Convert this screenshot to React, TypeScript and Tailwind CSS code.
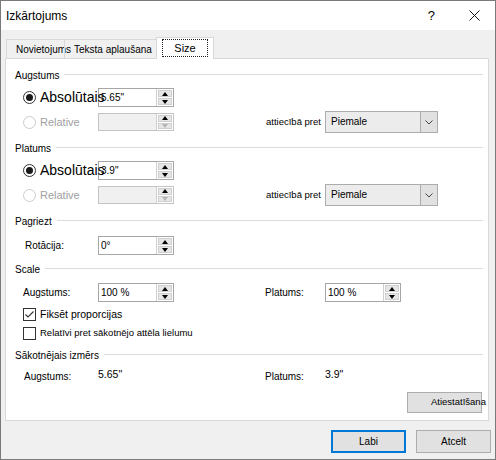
import React from 'react';

const font = { fontFamily: '"Liberation Sans", Arial, sans-serif' };

const Tri = ({ up, muted }: { up?: boolean; muted?: boolean }) => (
  <span
    className={`h-0 w-0 border-x-[3px] border-x-transparent ${
      up ? 'border-b-[4px]' : 'border-t-[4px]'
    } ${muted ? (up ? 'border-b-[#9a9a9a]' : 'border-t-[#b5b5b5]') : up ? 'border-b-black' : 'border-t-black'}`}
  />
);

const Spin = ({ value, disabled, h = 'h-[19px]' }: { value?: string; disabled?: boolean; h?: string }) => (
  <div
    className={`flex ${h} w-[76px] shrink-0 border ${
      disabled ? 'border-[#c4c4c4] bg-[#f0f0f0]' : 'border-[#a6a6a6] bg-white'
    }`}
  >
    <div className="flex-1 pl-[2px] text-[10px] leading-[17px] text-black">{value}</div>
    <div className="flex w-[17px] flex-col gap-px border-l border-[#d0d0d0] bg-white p-px">
      <div className="flex flex-1 items-center justify-center border border-[#cfcfcf] bg-[#e6e6e6]">
        <Tri up />
      </div>
      <div className="flex flex-1 items-center justify-center border border-[#cfcfcf] bg-[#e6e6e6]">
        <Tri muted={disabled} />
      </div>
    </div>
  </div>
);

const Radio = ({ checked, disabled }: { checked?: boolean; disabled?: boolean }) => (
  <span
    className={`flex h-[13px] w-[13px] shrink-0 items-center justify-center rounded-full border bg-white ${
      disabled ? 'border-[#cccccc]' : 'border-[#333333]'
    }`}
  >
    {checked && <span className="h-[7px] w-[7px] rounded-full bg-[#1a1a1a]" />}
  </span>
);

const Check = ({ checked }: { checked?: boolean }) => (
  <span className="flex h-[13px] w-[13px] shrink-0 items-center justify-center border border-[#333333] bg-white">
    {checked && (
      <svg width="11" height="11" viewBox="0 0 11 11">
        <path d="M1.5 5.5 L4 8 L9.5 2.5" fill="none" stroke="#333" strokeWidth="1.1" />
      </svg>
    )}
  </span>
);

const Header = ({ label, mt }: { label: string; mt: string }) => (
  <div className={`flex h-[12px] items-start ${mt}`}>
    <span className="whitespace-nowrap text-[10px] leading-[12px] text-black">{label}</span>
    <div className="ml-[5px] mt-[4px] h-px flex-1 bg-[#dcdcdc]" />
  </div>
);

const Select = () => (
  <div className="flex h-[22px] w-[113px] border border-[#acacac] bg-[#ececec]">
    <div className="flex-1 pl-[5px] text-[10px] leading-[20px] text-black">Piemale</div>
    <div className="flex w-[17px] items-center justify-center border-l border-[#acacac] bg-[#e1e1e1]">
      <svg width="8" height="5" viewBox="0 0 8 5">
        <path d="M0.5 0.5 L4 4 L7.5 0.5" fill="none" stroke="#444" strokeWidth="1" />
      </svg>
    </div>
  </div>
);

const SizeGroup = ({ label, value, first }: { label: string; value: string; first?: boolean }) => (
  <>
    <Header label={label} mt={first ? 'mt-0' : 'mt-[10px]'} />
    <div className="mt-[6px] flex h-[19px] items-center">
      <div className="flex w-[83px] shrink-0 items-center gap-[4px] pl-[8px]">
        <Radio checked />
        <span className="relative z-10 whitespace-nowrap text-[14px] leading-[19px] text-black">Absolūtais</span>
      </div>
      <Spin value={value} />
    </div>
    <div className="mt-[4px] flex h-[22px] items-center">
      <div className="flex w-[250px] shrink-0 items-center">
        <div className="flex w-[83px] shrink-0 items-center gap-[4px] pl-[8px]">
          <Radio disabled />
          <span className="whitespace-nowrap text-[11px] text-[#a0a0a0]">Relative</span>
        </div>
        <Spin disabled h="h-[18px]" />
      </div>
      <span className="w-[60px] shrink-0 pl-px text-[9.5px] text-black">attiecībā pret</span>
      <Select />
    </div>
  </>
);

export default function App() {
  return (
    <div
      className="flex h-[460px] w-[496px] flex-col overflow-hidden border border-[#7a7a7a] bg-[#f0f0f0] text-black"
      style={font}
    >
      {/* title bar */}
      <div className="flex h-[29px] shrink-0 items-center bg-white pl-[5px] pr-[15px]">
        <span className="text-[12px]">Izkārtojums</span>
        <span className="ml-auto mr-[34px] text-[13px]">?</span>
        <svg width="11" height="11" viewBox="0 0 11 11">
          <path d="M0.5 0.5 L10.5 10.5 M10.5 0.5 L0.5 10.5" stroke="#111" strokeWidth="1" />
        </svg>
      </div>

      <div className="flex flex-1 flex-col pl-[4px]">
        {/* tabs */}
        <div className="mt-[7px] flex h-[21px] items-end pl-px">
          <div className="h-[19px] w-[58px] shrink-0 border-l border-t border-[#d9d9d9] pl-[9px] text-[10px] leading-[19px] whitespace-nowrap">
            Novietojums
          </div>
          <div className="h-[19px] w-[93px] shrink-0 border-x border-t border-[#d9d9d9] pl-[9px] text-[10px] leading-[19px] whitespace-nowrap">
            Teksta aplaušana
          </div>
          <div className="relative z-10 -mb-px -ml-px flex h-[22px] w-[58px] shrink-0 justify-center border-x border-t border-[#d9d9d9] bg-white pt-px">
            <span className="flex h-[18px] w-[46px] items-center justify-center border border-dotted border-[#222] text-[11px]">
              Size
            </span>
          </div>
        </div>

        {/* panel */}
        <div className="flex h-[363px] w-[484px] flex-col border border-[#d9d9d9] bg-white pl-[9px] pr-[5px] pt-[11px]">
          <SizeGroup label="Augstums" value={'5.65"'} first />
          <SizeGroup label="Platums" value={'3.9"'} />

          <Header label="Pagriezt" mt="mt-[10px]" />
          <div className="mt-[8px] flex h-[19px] items-center">
            <span className="w-[83px] shrink-0 pl-[10px] text-[10px]">Rotācija:</span>
            <Spin value="0°" />
          </div>

          <Header label="Scale" mt="mt-[9px]" />
          <div className="mt-[7px] flex h-[19px] items-center">
            <div className="flex w-[250px] shrink-0 items-center">
              <span className="w-[83px] shrink-0 pl-[8px] text-[10px]">Augstums:</span>
              <Spin value="100 %" />
            </div>
            <span className="w-[60px] shrink-0 text-[10px]">Platums:</span>
            <Spin value="100 %" />
          </div>
          <div className="mt-[6px] flex h-[13px] items-center gap-[4px] pl-[8px]">
            <Check checked />
            <span className="text-[10.5px] whitespace-nowrap">Fiksēt proporcijas</span>
          </div>
          <div className="mt-[6px] flex h-[13px] items-center gap-[4px] pl-[8px]">
            <Check />
            <span className="text-[9.5px] whitespace-nowrap">Relatīvi pret sākotnējo attēla lielumu</span>
          </div>

          <Header label="Sākotnējais izmērs" mt="mt-[10px]" />
          <div className="mt-[8px] flex h-[12px] items-center">
            <div className="flex w-[250px] shrink-0 items-center">
              <span className="w-[83px] shrink-0 pl-[9px] text-[10px]">Augstums:</span>
              <span className="-mt-[2px] text-[10.5px]">5.65"</span>
            </div>
            <span className="w-[60px] shrink-0 text-[10px]">Platums:</span>
            <span className="-mt-[2px] text-[10.5px]">3.9"</span>
          </div>

          <div className="mt-[10px] flex justify-end pr-px">
            <div className="flex h-[21px] w-[75px] items-center whitespace-nowrap border border-[#adadad] bg-[#e1e1e1] pl-[23px] text-[9.5px]">
              Atiestatīšana
            </div>
          </div>
        </div>

        {/* footer buttons */}
        <div className="mt-[9px] flex justify-end gap-[10px] pr-[4px]">
          <div className="flex h-[23px] w-[75px] items-center justify-center border-2 border-[#0078d7] bg-[#e1e1e1] text-[10px]">
            Labi
          </div>
          <div className="flex h-[23px] w-[75px] items-center justify-center border border-[#adadad] bg-[#e1e1e1] text-[10px]">
            Atcelt
          </div>
        </div>
      </div>
    </div>
  );
}
